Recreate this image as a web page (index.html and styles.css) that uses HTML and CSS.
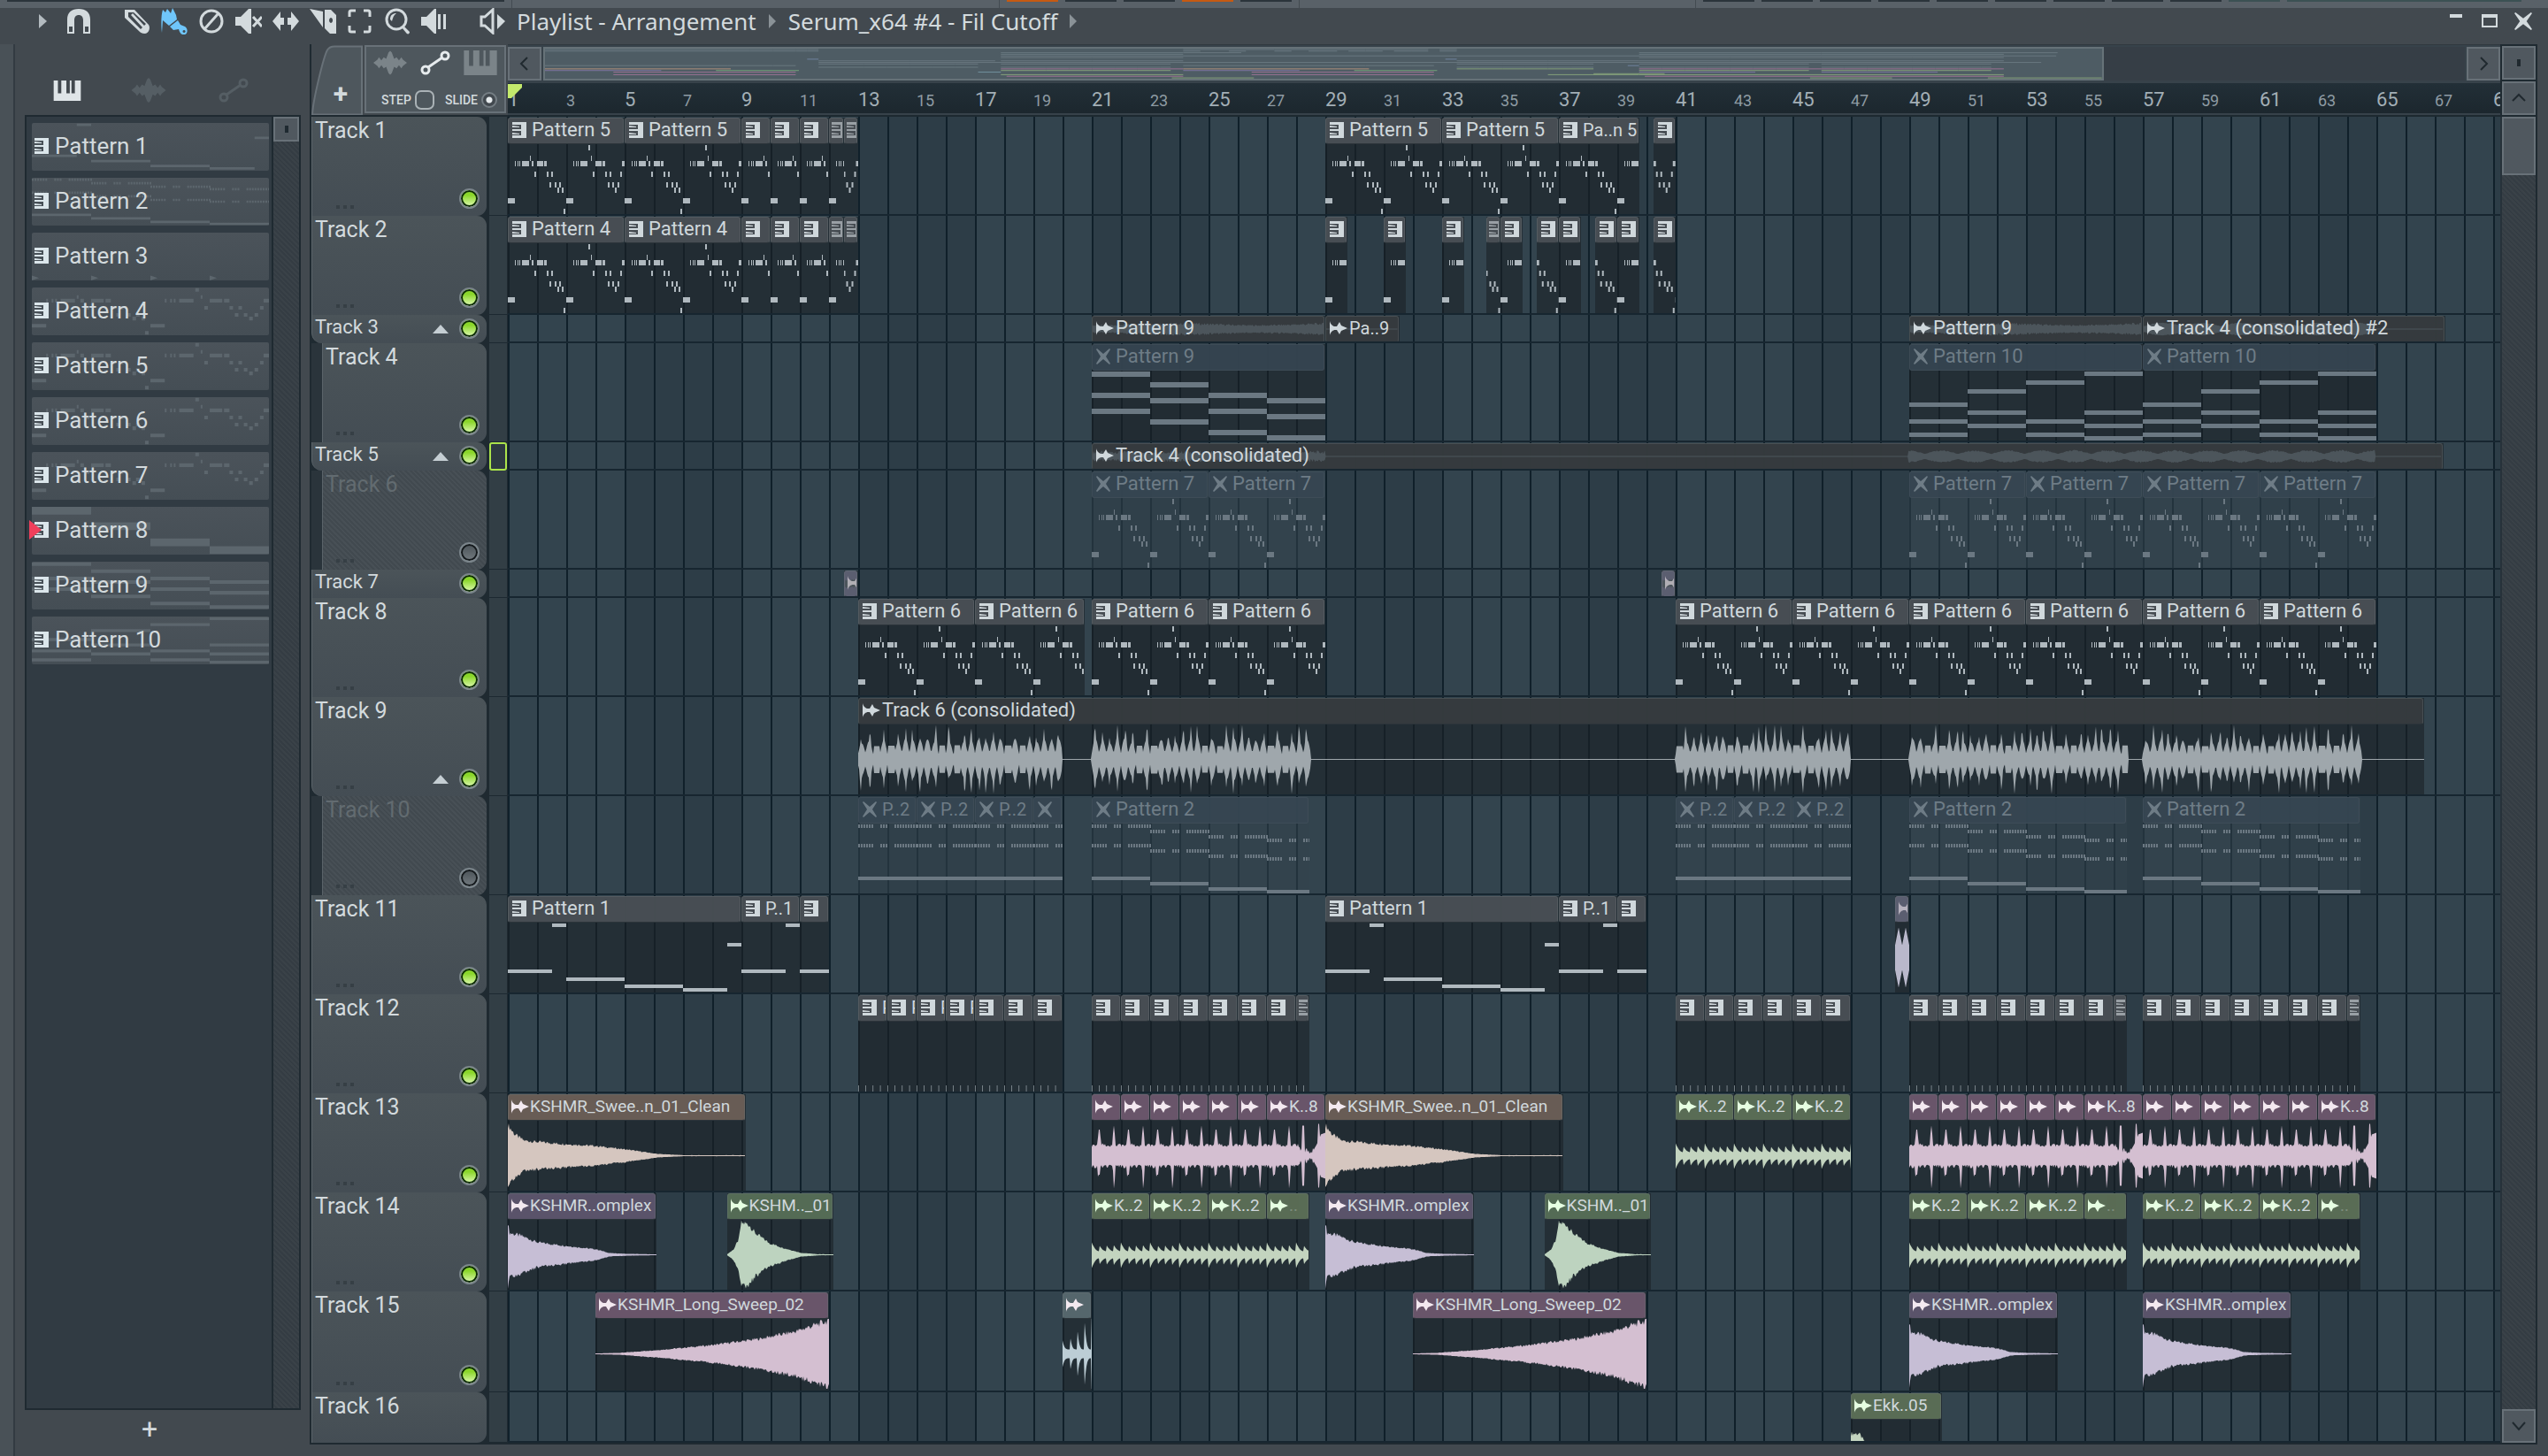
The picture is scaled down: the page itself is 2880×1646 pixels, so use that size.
FILE: index.html
```html
<!DOCTYPE html>
<html lang="en">
<head>
  <meta charset="UTF-8">
  <meta name="viewport" content="width=device-width, initial-scale=1.0">
  <title>Playlist - Arrangement</title>
  <link rel="stylesheet" href="styles.css">
</head>
<body>
  <!-- shared icons -->
  <svg class="defs" width="0" height="0">
    <symbol id="i-keys" viewBox="0 0 16 18" preserveAspectRatio="none"><path d="M0 0h16v18H0v-3h10v-5H0V8h10V3H0zM0 4l8 1v1H0zM0 12l8 1v1H0z"/></symbol>
    <symbol id="i-audio" viewBox="0 0 20 16"><path d="M0 0c1 4 4 6 6 6l2 0 3-5 2 4 7 3-7 3-2 4-3-5-2 0c-2 0-5 2-6 6z"/></symbol>
    <symbol id="i-mute" viewBox="0 0 16 18" preserveAspectRatio="none"><path d="M0 1l1-1 7 6 7-6 1 1-5 8 5 8-1 1-7-6-7 6-1-1 5-8z"/></symbol>
    <symbol id="i-piano" viewBox="0 0 32 24"><path d="M0 0h5v15h4V0h2v15h0V0h4v15h4V0h2v0h0v15h4V0h7v24H0z"/></symbol>
    <symbol id="i-wave" viewBox="0 0 42 30"><path d="M0 15l5-4 2-3 3 4 3-4 3 2 3-8 2-2 2 2 3 8 3-2 3 4 3-4 2 3 5 4-5 4-2 3-3-4-3 4-3-2-3 8-2 2-2-2-3-8-3 2-3-4-3 4-2-3z"/></symbol>
    <symbol id="i-auto" viewBox="0 0 34 28"><g fill="none" stroke="currentColor" stroke-width="3"><circle cx="6" cy="22" r="4"/><circle cx="28" cy="6" r="4"/><path d="M9 19L25 8"/></g></symbol>
  </svg>

  <div class="app-strip">
    <i class="slot slot-main"></i>
    <i class="slot-gap"></i>
    <i class="slot hot"></i><i class="slot"></i><i class="slot"></i><i class="slot hot"></i><i class="slot"></i>
    <i class="slot-gap wide"></i>
    <i class="slot"></i><i class="slot"></i><i class="slot"></i><i class="slot"></i><i class="slot"></i><i class="slot"></i><i class="slot"></i><i class="slot"></i><i class="slot"></i><i class="slot teal"></i>
    <i class="slot teal slot-last"></i>
  </div>

  <header class="titlebar">
    <button class="menu" aria-label="Playlist options"><svg viewBox="0 0 10 18"><path d="M0 0l10 9L0 18z"/></svg></button>
    <button class="tool magnet" aria-label="Snap"><svg viewBox="0 0 30 30"><path d="M2 29V13C2 5 7 1 15 1s13 4 13 12v16h-8V14c0-4-2-6-5-6s-5 2-5 6v15zM4 27h4v-6H4zM22 27h4v-6h-4z" fill-rule="evenodd"/></svg></button>
    <div class="tools">
      <button class="tool" aria-label="Draw"><svg viewBox="0 0 30 30"><path d="M1 11V2l11 0 16 17c2 3 1 9-4 10-4 0-6-2-7-3zM5 5v5l14 14 2-2L8 8l2-2 13 14 2-2L11 5z" fill-rule="evenodd"/></svg></button>
      <button class="tool active" aria-label="Paint"><svg viewBox="0 0 30 30"><path d="M2 2l3 3 2-4 4 5 2-6 4 8 1 5-9 7-7-6-1 14C0 20 0 8 2 2zM10 21l9-7 3 5 5 2c4 3 3 8 0 9-4 1-6-2-7-6l-6 1zM26 25a1.5 1.5 0 1 0 .1 0z" fill-rule="evenodd"/></svg></button>
      <button class="tool" aria-label="Delete"><svg viewBox="0 0 30 30"><circle class="line" cx="15" cy="15" r="12"/><path class="line" d="M7 24L23 6"/></svg></button>
      <button class="tool" aria-label="Mute"><svg viewBox="0 0 30 30"><path d="M0 10h6L15 1h3v28h-3L6 20H0z"/><path class="line" d="M20 10l10 11M30 10L20 21"/></svg></button>
      <button class="tool" aria-label="Slip"><svg viewBox="0 0 30 30"><path d="M0 15L9 4v7h4V5v20H13v-6H9v7zM30 15L21 4v7h-4V5v20h0v-6h4v7z"/></svg></button>
      <button class="tool" aria-label="Slice"><svg viewBox="0 0 30 30"><path d="M0 1l15 3v18zM17 2h7l6 6v21h-7l-6-6zM24 11a2 3 0 1 0 .1 0z" fill-rule="evenodd"/></svg></button>
      <button class="tool" aria-label="Select"><svg viewBox="0 0 30 30"><path class="line" d="M3 10V5q0-2 2-2h5M19 3h5q2 0 2 2v5M26 20v5q0 2-2 2h-5M10 27H5q-2 0-2-2v-5"/></svg></button>
      <button class="tool" aria-label="Zoom"><svg viewBox="0 0 30 30"><circle class="line" cx="14" cy="13" r="11"/><path d="M7 13c0-5 3-7 7-7-3 2-4 5-5 9zM20 22l3-1 6 6c0 3-3 3-4 1z"/></svg></button>
      <button class="tool" aria-label="Playback"><svg viewBox="0 0 30 30"><path d="M0 10h6L15 1h2v28h-2L6 20H0zM19 7h3v17h-3zM25 7h3v17h-3z"/></svg></button>
    </div>
    <button class="tool target" aria-label="Preview"><svg viewBox="0 0 30 30"><path class="line" d="M2 10h4l9-8v26l-9-8H2z"/><path d="M20 7l9 8-9 9z"/></svg></button>
    <nav class="crumbs">
      <a href="#">Playlist - Arrangement</a><i></i>
      <a href="#">Serum_x64 #4 - Fil Cutoff</a><i></i>
    </nav>
    <div class="window-buttons">
      <button aria-label="Minimize"><svg viewBox="0 0 20 20"><path d="M3 2h14v4H3z"/></svg></button>
      <button aria-label="Maximize"><svg viewBox="0 0 20 20"><path d="M1 2h18v15H1zM3 6v9h14V6z" fill-rule="evenodd"/></svg></button>
      <button aria-label="Close"><svg><use href="#i-mute"/></svg></button>
    </div>
  </header>

  <main class="window">
    <div class="edge"></div>

    <aside class="browser">
      <div class="browser-tabs">
        <button class="on" aria-label="Patterns"><svg><use href="#i-piano"/></svg></button>
        <button aria-label="Audio clips"><svg><use href="#i-wave"/></svg></button>
        <button aria-label="Automation"><svg><use href="#i-auto"/></svg></button>
      </div>
      <div class="browser-box">
        <ul id="patterns" class="patterns"></ul>
        <div class="bar-scroll"><div class="bar-thumb"></div></div>
      </div>
      <button class="add-pattern" aria-label="Add pattern">+</button>
    </aside>

    <section class="playlist">
      <div class="corner">
        <button class="tab" aria-label="Add track">
          <svg viewBox="0 0 58 78"><path d="M1 78C2 60 14 12 18 5c2-3 4-4 8-4h31v77z"/></svg>
          <span>+</span>
        </button>
        <div class="modes">
          <div class="mode-icons">
            <svg><use href="#i-wave"/></svg>
            <svg class="on"><use href="#i-auto"/></svg>
            <svg><use href="#i-piano"/></svg>
          </div>
          <div class="mode-switches">
            <label for="step">STEP</label><input type="checkbox" id="step">
            <label for="slide">SLIDE</label><input type="radio" id="slide" checked>
          </div>
        </div>
      </div>
      <div class="timeline-head">
        <div class="overview">
          <button class="scroll-btn" aria-label="Scroll left"><svg viewBox="0 0 20 20"><path d="M13 3L6 10l7 7"/></svg></button>
          <div class="overview-track"><div class="overview-thumb" id="overview"></div></div>
          <button class="scroll-btn" aria-label="Scroll right"><svg viewBox="0 0 20 20"><path d="M7 3l7 7-7 7"/></svg></button>
        </div>
        <div class="ruler" id="ruler">
          <svg class="playhead" viewBox="0 0 16 18"><path d="M0 0h16v4L4 16H0z"/></svg>
        </div>
      </div>
      <div class="side-head">
        <button class="scroll-btn knob" aria-label="Zoom"><i></i></button>
        <button class="scroll-btn" aria-label="Scroll up"><svg viewBox="0 0 20 20"><path d="M3 13l7-7 7 7"/></svg></button>
      </div>
      <div class="tracks" id="tracks"></div>
      <div class="side">
        <div class="side-thumb"></div>
        <button class="scroll-btn" aria-label="Scroll down"><svg viewBox="0 0 20 20"><path d="M3 6l7 8 7-8"/></svg></button>
      </div>
    </section>
  </main>
  <script src="script.js"></script>
</body>
</html>
```
FILE: styles.css
```css
* {
  margin: 0;
  padding: 0;
  box-sizing: border-box;
}
:root {
  --bar: 33px;
  --panel: #42494f;
  --button: #50585f;
  --button-edge: #687178;
  --dark: #1f2a31;
  --text: #d3dadd;
}
body {
  display: flex;
  flex-direction: column;
  height: 100vh;
  overflow: hidden;
  background-color: var(--panel);
  color: var(--text);
  font-family: Roboto, sans-serif;
}
button {
  border: none;
  background: none;
  color: inherit;
  font: inherit;
  cursor: pointer;
}
svg {
  display: block;
  fill: currentColor;
}
.defs {
  position: absolute;
}

/* bottom edge of the main toolbar */
.app-strip {
  display: flex;
  gap: 8px;
  height: 9px;
  padding-left: 8px;
  background-color: #596168;
  flex: none;
}
.slot {
  width: 58px;
  height: 2px;
  background-color: #2b343b;
  flex: none;
}
.slot-main {
  width: 562px;
}
.slot-gap {
  width: 552px;
  border-left: 1px solid #434b51;
  border-right: 1px solid #434b51;
  flex: none;
}
.slot-gap.wide {
  width: 449px;
}
.slot.hot {
  background-color: #c65a12;
}
.slot.teal {
  background-color: #3c5154;
}
.slot-last {
  width: 265px;
}

/* title bar */
.titlebar {
  display: flex;
  align-items: center;
  height: 41px;
  padding: 0 18px 12px 44px;
  flex: none;
}
.menu svg {
  width: 9px;
  height: 18px;
  color: #b3bbc0;
}
.menu {
  width: 30px;
}
.tool svg {
  width: 30px;
  height: 30px;
}
.tool.active {
  color: #6fc6fa;
}
.line {
  fill: none;
  stroke: currentColor;
  stroke-width: 3;
}
.tools {
  display: flex;
  gap: 12px;
  margin-left: 36px;
}
.target {
  margin-left: 36px;
}
.crumbs {
  display: flex;
  align-items: center;
  margin-left: 12px;
  height: 30px;
  font-family: "Noto Sans", sans-serif;
  font-size: 26px;
  line-height: 30px;
}
.crumbs a {
  color: var(--text);
  text-decoration: none;
}
.crumbs i {
  margin: 0 14px 0 14px;
  border-left: 8px solid #8a9297;
  border-top: 8px solid transparent;
  border-bottom: 8px solid transparent;
}
.window-buttons {
  display: flex;
  gap: 18px;
  margin-left: auto;
}
.window-buttons svg {
  width: 20px;
  height: 20px;
}

.window {
  display: flex;
  flex: 1;
  min-height: 0;
  padding-right: 12px;
}
.edge {
  width: 17px;
  background-color: #495157;
  border-right: 2px solid #333b42;
}

/* pattern list on the left */
.browser {
  display: flex;
  flex-direction: column;
  width: 333px;
  padding: 0 10px 0 11px;
}
.browser-tabs {
  display: flex;
  align-items: center;
  justify-content: space-between;
  height: 80px;
  padding: 24px 56px 0 32px;
  color: #555e64;
}
.browser-tabs .on {
  color: #dfe5e8;
}
.browser-tabs svg {
  width: 40px;
  height: 28px;
}
.browser-tabs .on svg {
  width: 32px;
  height: 23px;
}
.browser-box {
  display: flex;
  flex: 1;
  min-height: 0;
  background-color: #313b43;
  border: 2px solid var(--dark);
}
.patterns {
  flex: 1;
  list-style: none;
  padding: 7px 3px 0 6px;
}
.pattern {
  position: relative;
  display: flex;
  align-items: center;
  gap: 7px;
  height: 54px;
  margin-bottom: 8px;
  padding: 0 0 2px 3px;
  background: linear-gradient(#4b535a, #454e55);
  border-radius: 2px;
  font-size: 26px;
}
.pattern .preview {
  position: absolute;
  inset: 0;
  width: 100%;
  height: 100%;
  color: #5c666d;
}
.pattern .keys {
  position: relative;
  width: 16px;
  height: 18px;
  color: #dbe6eb;
}
.pattern span {
  position: relative;
}
.pattern.current::before {
  content: "";
  position: absolute;
  z-index: 1;
  left: -3px;
  border-left: 14px solid #f03f5b;
  border-top: 11px solid transparent;
  border-bottom: 11px solid transparent;
}
.bar-scroll {
  width: 31px;
  border-left: 2px solid var(--dark);
}
.bar-scroll,
.side {
  background: repeating-linear-gradient(45deg, #3a4248 0 2px, #343c43 2px 4px);
}
.bar-thumb {
  height: 28px;
  background: linear-gradient(var(--dark), var(--dark)) center / 4px 8px no-repeat var(--button);
  border: 2px solid var(--button-edge);
}
.add-pattern {
  height: 52px;
  padding: 0 30px 10px 0;
  font-size: 32px;
  line-height: 32px;
}

/* playlist frame */
.playlist {
  flex: 1;
  min-width: 0;
  display: grid;
  grid-template-columns: 222px minmax(0, 1fr) 42px;
  grid-template-rows: 82px minmax(0, 1fr);
  margin-bottom: 13px;
  border-left: 2px solid var(--dark);
  border-bottom: 2px solid var(--dark);
}
.corner {
  display: flex;
  gap: 2px;
  padding: 1px 2px 2px 0;
  background-color: var(--panel);
  border-bottom: 2px solid var(--dark);
}
.tab {
  position: relative;
  width: 58px;
}
.tab svg {
  position: absolute;
  inset: 0;
  width: 58px;
  height: 79px;
  fill: #4e575d;
  stroke: var(--button-edge);
  stroke-width: 2;
}
.tab span {
  position: relative;
  display: block;
  padding: 32px 0 0 8px;
  font-size: 30px;
  font-weight: 700;
}
.modes {
  flex: 1;
  display: flex;
  flex-direction: column;
  justify-content: space-between;
  padding: 4px 8px 2px 8px;
  background-color: #4e575d;
  border: 2px solid var(--button-edge);
}
.mode-icons {
  display: flex;
  justify-content: space-between;
  align-items: center;
  color: #7b8489;
}
.mode-icons svg {
  width: 38px;
  height: 28px;
}
.mode-icons .on {
  color: #e6ebed;
}
.mode-switches {
  display: flex;
  align-items: center;
  justify-content: flex-end;
  gap: 4px;
  font-size: 14px;
  font-weight: 500;
}
.mode-switches input {
  appearance: none;
  width: 22px;
  height: 22px;
  border: 2px solid #aab2b6;
  border-radius: 7px;
}
.mode-switches input[type="radio"] {
  width: 18px;
  height: 18px;
  border: 2px solid #757e84;
  border-radius: 50%;
  background: radial-gradient(circle, #e6ebed 0 3px, #42494f 4px);
}
.mode-switches input[type="checkbox"] {
  margin-right: 8px;
}
.timeline-head {
  min-width: 0;
  padding-top: 2px;
  background-color: #37424a;
  border-top: 1px solid #31393f;
  border-bottom: 2px solid #1d2930;
}
.overview {
  display: flex;
  gap: 2px;
  height: 38px;
}
.scroll-btn {
  display: grid;
  place-items: center;
  width: 38px;
  height: 38px;
  background-color: var(--button);
  border: 2px solid var(--button-edge);
  flex: none;
}
.scroll-btn svg {
  width: 20px;
  height: 20px;
  fill: none;
  stroke: #20292f;
  stroke-width: 2;
}
.knob i {
  width: 4px;
  height: 8px;
  background-color: #20292f;
}
.overview-track {
  flex: 1;
  background-color: #363e46;
}
.overview-thumb {
  width: 81.2%;
  height: 38px;
  background-color: #4e5c64;
  border: 2px solid #667278;
}
.overview-thumb svg {
  width: 100%;
  height: 100%;
}
.ruler {
  position: relative;
  display: flex;
  align-items: baseline;
  height: 34px;
  margin-top: 3px;
  padding-top: 6px;
  overflow: hidden;
  background: linear-gradient(#222f37, #1c272e);
  color: #8e9ba3;
}
.ruler span {
  width: calc(2 * var(--bar));
  flex: none;
  font-size: 18px;
  line-height: 26px;
}
.ruler .major {
  color: #a3afb6;
  font-size: 22px;
}
.playhead {
  position: absolute;
  top: 1px;
  left: 0;
  width: 16px;
  height: 18px;
  color: #c4ea6c;
}
.side-head {
  display: flex;
  flex-direction: column;
  gap: 2px;
  padding: 2px;
  background-color: var(--dark);
}
.side {
  display: flex;
  flex-direction: column;
  justify-content: space-between;
  padding: 0 2px;
  border-right: 2px solid var(--dark);
  border-left: 2px solid #27323a;
}
.side-thumb {
  width: 38px;
  height: 66px;
  background-color: var(--button);
  border: 2px solid var(--button-edge);
}
.side,
.side-head {
  align-items: center;
}

/* tracks */
.tracks {
  grid-column: 1 / 3;
  display: flex;
  flex-direction: column;
  min-height: 0;
  overflow: hidden;
  background-color: var(--dark);
}
.track {
  display: flex;
  height: 112px;
  flex: none;
}
.track.small {
  height: 32px;
}
.track.tall {
  height: 114px;
}
.track:last-child {
  flex: 1;
  min-height: 0;
}
.track-head {
  position: relative;
  width: 198px;
  padding: 1px 8px 0 3px;
  background: linear-gradient(#4b5459, #444d54);
  border-left: 1px solid #5a6369;
  border-radius: 0 11px 11px 0;
  font-size: 25px;
  line-height: 30px;
  flex: none;
}
.small .track-head {
  padding-top: 0;
  font-size: 22px;
  line-height: 28px;
}
.nested .track-head {
  width: 186px;
  margin-left: 12px;
}
.nested {
  background: linear-gradient(#2a343b, #2a343b) 0 0 / 12px 100% no-repeat;
}
.parent .track-head {
  border-bottom-left-radius: 12px;
}
.off .track-head {
  background: repeating-linear-gradient(45deg, #41494f 0 2px, #485056 2px 4px);
  color: #626b70;
}
.track-controls {
  position: absolute;
  right: 8px;
  bottom: 8px;
  display: flex;
  align-items: center;
  gap: 12px;
}
.small .track-controls {
  bottom: 5px;
}
.track-controls i {
  border-bottom: 10px solid #c5ced3;
  border-left: 9px solid transparent;
  border-right: 9px solid transparent;
}
.track-controls input {
  appearance: none;
  width: 23px;
  height: 23px;
  border: 2px solid #7b858b;
  border-radius: 50%;
  background: linear-gradient(#4a5257, #737b80);
  box-shadow: inset 0 0 0 2px #14191c;
  cursor: pointer;
}
.track-controls input:checked {
  background: linear-gradient(#8ad62a 30%, #e2fbb8);
  box-shadow: inset 0 0 0 2px #0c2a06;
}
.dots {
  position: absolute;
  left: 27px;
  bottom: 8px;
  width: 20px;
  height: 4px;
  background: repeating-linear-gradient(90deg, #363f45 0 4px, transparent 4px 8px);
}
.nested .dots {
  left: 15px;
}
.small .dots,
.track:last-child .dots,
.track:last-child .track-controls {
  display: none;
}
.cue {
  width: 20px;
  margin: 0 1px 0 3px;
  background-color: #323e45;
  border-bottom: 1px solid #1d2931;
  flex: none;
}
.cue.marked {
  border: 2px solid #abe34b;
  border-radius: 3px;
  background-color: #2e3a42;
}
.lane {
  position: relative;
  flex: 1;
  min-width: 0;
  overflow: hidden;
  border-bottom: 2px solid #172630;
  background:
    repeating-linear-gradient(90deg, #10202a 0 2px, transparent 2px 33px),
    repeating-linear-gradient(90deg, #33444e 0 132px, #2d3d47 132px 264px);
}

/* clips */
.clip {
  position: absolute;
  top: 1px;
  bottom: 0;
  left: calc(var(--start) * var(--bar));
  width: calc(var(--len) * var(--bar));
  overflow: hidden;
  background-color: rgba(27, 34, 39, 0.6);
  color: #b0b9bf;
}
.clip-head {
  position: relative;
  display: flex;
  align-items: center;
  gap: 6px;
  height: 30px;
  margin-right: 1px;
  padding: 0 0 2px 4px;
  overflow: hidden;
  background-color: rgba(73, 80, 85, 0.94);
  border: 1px solid rgba(110, 118, 122, 0.35);
  border-bottom-color: #2c343a;
  border-radius: 3px;
  color: #d0d8dc;
  font-size: 22px;
  line-height: 26px;
  white-space: nowrap;
}
.clip.short .clip-head {
  font-size: 20px;
}
.clip-head .icon {
  position: relative;
  width: 16px;
  height: 18px;
  flex: none;
}
.clip-head .icon.audio {
  width: 20px;
  height: 16px;
  margin-right: -4px;
}
.clip-head span {
  position: relative;
}
.clip-head .faint {
  opacity: 0.3;
}
.clip-body {
  width: 100%;
  height: 79px;
}
.clip.narrow .clip-head {
  padding-left: 2px;
}
.clip.narrow .clip-head .icon {
  opacity: 0.6;
}
.clip .mini-wave {
  position: absolute;
  inset: 0;
  width: 100%;
  height: 100%;
  color: #4c555b;
}
.track.muted .clip-head {
  background-color: rgba(54, 69, 81, 0.92);
  border-color: rgba(74, 88, 98, 0.4);
  color: #6e7c86;
}
.track.muted .clip {
  color: #6b7882;
}
.track.off .clip {
  background-color: rgba(51, 68, 76, 0.55);
}
.clip.gray .clip-head {
  background-color: rgba(54, 59, 63, 0.94);
}
.clip.gray {
  color: #9fa7ac;
}
.clip.brown { color: #d5c6bf; }
.clip.violet { color: #c6bed5; }
.clip.green { color: #bdd3bf; }
.clip.olive { color: #c3d4bf; }
.clip.pink { color: #d4bfd1; }
.clip.teal { color: #bccdd5; }
.clip.haze { color: #b9b8cb; }
.clip.brown .clip-head { background-color: #685c55; }
.clip.violet .clip-head { background-color: #5a536a; }
.clip.green .clip-head { background-color: #546b55; }
.clip.olive .clip-head { background-color: #596c55; }
.clip.pink .clip-head { background-color: #69556a; }
.clip.teal .clip-head { background-color: #55666c; }
.clip.haze .clip-head { background-color: #5b5e70; }
.clip.sample .clip-head {
  gap: 5px;
  padding-left: 3px;
  font-size: 19px;
}
.clip.sample .icon {
  color: #f3e9f0;
}
.clip.sample.olive .icon,
.clip.sample.green .icon {
  color: #e6ffe2;
}
```
FILE: script.js
```js
const BAR = 33;

// note sets: [x, y, width] in px, 33px per bar
const melody = [
  [0, 61, 8], [8, 19, 1], [11, 19, 1], [13, 19, 1], [16, 19, 8], [25, 13, 1], [27, 19, 2], [30, 31, 2],
  [33, 19, 7], [41, 19, 3], [44, 31, 2], [49, 31, 2], [47, 43, 2], [53, 43, 2], [56, 49, 2], [58, 43, 2],
  [61, 49, 2], [63, 73, 2], [66, 61, 8], [74, 19, 1], [77, 19, 1], [79, 19, 1], [82, 19, 8], [91, 1, 2],
  [94, 13, 1], [96, 31, 2], [99, 19, 7], [107, 19, 3], [110, 31, 2], [115, 31, 2], [113, 43, 2],
  [118, 43, 2], [121, 49, 2], [124, 43, 2], [127, 31, 2], [129, 19, 3]
];
const bass = [[0, 53, 50], [50, 1, 16], [66, 62, 66], [132, 70, 66], [198, 74, 50], [248, 23, 16]];

function chords(rows) {
  return rows.flatMap((ys, i) => ys.map(y => [i * 66, y, 66]));
}

function stabs(rows) {
  const notes = [];
  rows.forEach((ys, i) => {
    [[0, 18], [25, 34], [41, 66]].forEach(([a, b]) => {
      for (let x = a; x < b; x += 3) {
        notes.push([i * 66 + x, ys[0], 2], [i * 66 + x, ys[1], 2]);
      }
    });
    notes.push([i * 66, ys[2], 66]);
  });
  return notes;
}

const ticks = Array.from({ length: 32 }, (_, i) => [i * 8.25, 72, 0.6]);

const patterns = {
  1: { notes: bass, h: 4, len: 8 },
  2: { notes: stabs([[1, 23, 60], [7, 29, 66], [13, 35, 72], [17, 38, 75]]), h: 4, len: 8 },
  3: { notes: ticks, h: 7, len: 8 },
  4: { notes: melody, h: 6, len: 4 },
  5: { notes: melody, h: 6, len: 4 },
  6: { notes: melody, h: 6, len: 4 },
  7: { notes: melody, h: 6, len: 4 },
  8: { notes: chords([[0], [26], [53], [66]]), h: 13, len: 8 },
  9: { notes: chords([[1, 25, 43], [13, 31, 55], [25, 43, 67], [31, 49, 73]]), h: 6, len: 8 },
  10: { notes: chords([[36, 55, 70], [21, 45, 60], [11, 55, 70], [1, 45, 60, 74]]), h: 5, len: 8 }
};

// repeatable noise
function noise(i) {
  const v = Math.sin(i * 12.9898) * 43758.5453;
  return v - Math.floor(v);
}

function envelope(points, t) {
  for (let i = 1; i < points.length; i++) {
    if (t <= points[i][0]) {
      const [x0, y0] = points[i - 1];
      const [x1, y1] = points[i];
      return y0 + (y1 - y0) * (t - x0) / (x1 - x0);
    }
  }
  return points[points.length - 1][1];
}

function shaped(points) {
  return (x, w, side) => envelope(points, x / w) * (0.88 + 0.22 * noise(x + side * 500));
}

// quarter-bar hits: a wide body with a narrow spike, some of them flat
function bursts(x, side) {
  const n = Math.floor(x / 8.25);
  const t = (x % 8.25) / 8.25;
  if (n % 9 === 2 || n % 9 === 4) {
    return t < 0.1 ? 6 : 15 + noise(n + side);
  }
  const peak = 22 + 17 * noise(n * 3 + side * 77);
  const body = 7 + (11 + 6 * noise(n * 5)) * Math.sin(Math.PI * t);
  const spike = peak * Math.max(0, 1.1 - Math.abs(t - 0.35 - 0.3 * noise(n)) * 3.5);
  return Math.min(39, Math.max(body, spike));
}

function inside(x, ranges) {
  return ranges.find(r => x >= r[0] * BAR && x < r[1] * BAR);
}

function kick(x, side) {
  const n = Math.floor((x - 8) / 16.5);
  const d = Math.abs(x - 8.5 - Math.round((x - 8.5) / 16.5) * 16.5);
  const peak = side ? (n % 2 ? 37 : 26) : 34;
  const base = 10 + 4 * noise(x * 3 + side);
  return d < 2 ? peak - d * 9 : base;
}

const waves = {
  fall: shaped([[0, 35], [0.03, 24], [0.07, 17], [0.2, 14], [0.37, 11], [0.5, 7], [0.63, 2], [0.74, 0.6], [1, 0.6]]),
  decay: shaped([[0, 38], [0.01, 25], [0.1, 21], [0.2, 14], [0.35, 11], [0.5, 8], [0.6, 6], [0.68, 2], [0.8, 1], [1, 0.5]]),
  burst: shaped([[0, 0.6], [0.06, 6], [0.11, 18], [0.13, 36], [0.2, 35], [0.26, 25], [0.4, 13], [0.55, 7], [0.7, 2], [0.85, 0.7], [1, 0.5]]),
  late: shaped([[0, 24], [0.09, 24], [0.2, 8], [0.4, 0.5], [1, 0.5]]),
  rise: shaped([[0, 0.5], [0.1, 1], [0.3, 5], [0.5, 10], [0.7, 17], [0.85, 25], [1, 38]]),
  kicks: (x, w, side) => kick(x, side),
  kicksEnd: (x, w, side) => {
    if (x < 36) return kick(x, side);
    if (x > 52) return x > 57 && x < 60 ? 36 : envelope([[52, 5], [58, 16], [61, 24], [66, 26]], x);
    return Math.abs(x - 41) < 2 ? 34 : 2 + 8 * noise(x);
  },
  hats: (x, w, side) => {
    const t = (x % 8.25) / 8.25;
    return 4 + (x % 33 < 8.25 ? 11 : 8) * Math.pow(1 - t, 2) * (side ? 1 : 0.9);
  },
  plucks: x => {
    const n = Math.floor(x / 8.25);
    const t = (x % 8.25) / 8.25;
    return 5 + (10 + n * 8) * Math.pow(Math.abs(1 - t), 4);
  },
  bits: x => 34 - 20 * Math.abs(((x % 8) - 4) / 4),
  synth: (x, w, side) => {
    return inside(x, [[0, 7], [8, 15.5], [28, 34], [36, 43.5], [44, 51.5]]) ? bursts(x, side) : 0.5;
  },
  pad: (x, w, side) => (4 + 2.5 * Math.sin(x / 60) ** 2) * (0.6 + 0.5 * noise(x + side * 50)) + 1,
  padShort: x => x < 84 ? 0.5 : 0,
  padTail: (x, w, side) => {
    if (x < BAR * 8) return 3 + 4 * noise(x + side * 50);
    if (x < BAR * 28 || x > BAR * 44) return 0.5;
    return 3 + 5 * Math.abs(Math.sin(x / 12)) * (0.6 + 0.4 * noise(x + side * 50));
  },
  padEnd: x => x < BAR * 8 ? 3 + 4 * Math.abs(Math.sin(x / 14)) + noise(x) : 0.5
};

function wavePath(fn, width, height) {
  const mid = height / 2;
  const up = [];
  const down = [];
  for (let x = 0; x <= width; x++) {
    up.push(`${x} ${(mid - fn(x, width, 0)).toFixed(1)}`);
    down.unshift(`${x} ${(mid + fn(x, width, 1)).toFixed(1)}`);
  }
  return `M${up.join('L')}L${down.join('L')}z`;
}

function notePath(p) {
  return p.notes.map(([x, y, w]) => `M${x} ${y}h${w}v${p.h}h${-w}z`).join('');
}

// pattern clip: number, start bar, length in bars, label, offset into the pattern
function pat(n, start, len, label = '', offset = 0) {
  return { n, start, len, label, offset };
}

function aud(wave, color, start, len, label = '') {
  return { wave, color, start, len, label };
}

function each(bars, make) {
  return bars.map(make);
}

function intro(n) {
  const name = 'Pattern ' + n;
  return [
    pat(n, 1, 4, name), pat(n, 5, 4, name),
    pat(n, 9, 1), pat(n, 10, 1), pat(n, 11, 1),
    pat(n, 12, 0.5), pat(n, 12.5, 0.5, '', 3.5)
  ];
}

function bassline(b) {
  return [pat(1, b, 8, 'Pattern 1'), pat(1, b + 8, 2, 'P..1'), pat(1, b + 10, 1)];
}

function drums(b) {
  return each([0, 1, 2, 3, 4, 5, 6, 7], i => pat(3, b + i, i === 7 ? 0.45 : 1));
}

function kicks(b) {
  return [
    ...each([0, 1, 2, 3, 4, 5], i => aud('kicks', 'pink', b + i, 1)),
    aud('kicksEnd', 'pink', b + 6, 2, 'K..8')
  ];
}

function hats(b) {
  return [
    ...each([0, 2, 4], i => aud('hats', 'olive', b + i, 2, 'K..2')),
    aud('hats', 'olive', b + 6, 1.45, '..')
  ];
}

const tracks = [
  { clips: [
    ...intro(5),
    pat(5, 29, 4, 'Pattern 5'), pat(5, 33, 4, 'Pattern 5'), pat(5, 37, 2.75, 'Pa..n 5'), pat(5, 40.25, 0.75, '', 3.25)
  ] },
  { clips: [
    ...intro(4),
    pat(4, 29, 0.75), pat(4, 31, 0.75, '', 2), pat(4, 33, 0.75), pat(4, 34.5, 0.5, '', 1.5), pat(4, 35, 0.75, '', 2),
    pat(4, 36.25, 0.75, '', 1.25), pat(4, 37, 0.75), pat(4, 38.25, 0.75, '', 1.25), pat(4, 39, 0.75, '', 2),
    pat(4, 40.25, 0.75, '', 1.25)
  ] },
  { size: 'small', parent: true, clips: [
    aud('pad', 'gray', 21, 8, 'Pattern 9'), aud('padShort', 'gray', 29, 2.55, 'Pa..9'),
    aud('pad', 'gray', 49, 8, 'Pattern 9'), aud('padEnd', 'gray', 57, 10.36, 'Track 4 (consolidated) #2')
  ] },
  { nested: true, muted: true, clips: [
    pat(9, 21, 8, 'Pattern 9'), pat(10, 49, 8, 'Pattern 10'), pat(10, 57, 8, 'Pattern 10')
  ] },
  { size: 'small', parent: true, cue: true, clips: [aud('padTail', 'gray', 21, 46.3, 'Track 4 (consolidated)')] },
  { nested: true, muted: true, off: true, clips: each([21, 25, 49, 53, 57, 61], b => pat(7, b, 4, 'Pattern 7')) },
  { size: 'small', clips: [aud('pad', 'haze', 12.5, 0.5), aud('pad', 'haze', 40.5, 0.5)] },
  { clips: each([13, 17, 21, 25, 41, 45, 49, 53, 57, 61], b => pat(6, b, b === 17 ? 3.75 : 4, 'Pattern 6')) },
  { parent: true, clips: [aud('synth', 'gray', 13, 53.64, 'Track 6 (consolidated)')] },
  { nested: true, muted: true, off: true, clips: [
    pat(2, 13, 2, 'P..2'), pat(2, 15, 2, 'P..2'), pat(2, 17, 2, 'P..2'), pat(2, 19, 1),
    pat(2, 21, 7.45, 'Pattern 2'),
    pat(2, 41, 2, 'P..2'), pat(2, 43, 2, 'P..2'), pat(2, 45, 2, 'P..2'),
    pat(2, 49, 7.45, 'Pattern 2'), pat(2, 57, 7.45, 'Pattern 2')
  ] },
  { clips: [...bassline(1), ...bassline(29), aud('bits', 'haze', 48.5, 0.5)] },
  { clips: [
    ...each([13, 14, 15, 16], b => pat(3, b, 1, 'P')), ...each([17, 18, 19], b => pat(3, b, 1)),
    ...drums(21), ...each([41, 42, 43, 44, 45, 46], b => pat(3, b, 1)), ...drums(49), ...drums(57)
  ] },
  { clips: [
    aud('fall', 'brown', 1, 8.15, 'KSHMR_Swee..n_01_Clean'), ...kicks(21),
    aud('fall', 'brown', 29, 8.15, 'KSHMR_Swee..n_01_Clean'),
    ...each([41, 43, 45], b => aud('hats', 'olive', b, 2, 'K..2')), ...kicks(49), ...kicks(57)
  ] },
  { clips: [
    aud('decay', 'violet', 1, 5.1, 'KSHMR..omplex'), aud('burst', 'green', 8.5, 3.64, 'KSHM.._01'), ...hats(21),
    aud('decay', 'violet', 29, 5.1, 'KSHMR..omplex'), aud('burst', 'green', 36.5, 3.64, 'KSHM.._01'),
    ...hats(49), ...hats(57)
  ] },
  { size: 'tall', clips: [
    aud('rise', 'pink', 4, 8, 'KSHMR_Long_Sweep_02'), aud('plucks', 'teal', 20, 1),
    aud('rise', 'pink', 32, 8, 'KSHMR_Long_Sweep_02'),
    aud('decay', 'violet', 49, 5.1, 'KSHMR..omplex'), aud('decay', 'violet', 57, 5.1, 'KSHMR..omplex')
  ] },
  { clips: [aud('late', 'olive', 47, 3.12, 'Ekk..05')] }
];

function clipHtml(clip, track) {
  const width = clip.len * BAR;
  const classes = ['clip'];
  const small = track.size === 'small';
  let icon = 'keys';
  let body = '';
  let behind = '';

  if (clip.n) {
    if (track.muted) icon = 'mute';
    body = `<svg class="clip-body" viewBox="${clip.offset * BAR} 0 ${width} 79" preserveAspectRatio="none"><path d="${notePath(patterns[clip.n])}"/></svg>`;
  } else {
    icon = 'audio';
    classes.push(clip.color);
    if (clip.color !== 'gray') classes.push('sample');
    const h = small ? 30 : 79;
    const svg = `viewBox="0 0 ${width} ${h}" preserveAspectRatio="none"><path d="${wavePath(waves[clip.wave], width, h)}"/></svg>`;
    if (small) {
      behind = '<svg class="mini-wave" ' + svg;
    } else {
      body = '<svg class="clip-body" ' + svg;
    }
  }
  if (clip.len < 3) classes.push('short');
  if (clip.len < 0.6) classes.push('narrow');

  const faint = clip.label === '..' ? ' class="faint"' : '';
  const label = clip.label ? `<span${faint}>${clip.label}</span>` : '';
  return `<div class="${classes.join(' ')}" style="--start:${clip.start - 1};--len:${clip.len}">
    <div class="clip-head">${behind}<svg class="icon ${icon}"><use href="#i-${icon}"/></svg>${label}</div>${body}</div>`;
}

document.getElementById('tracks').innerHTML = tracks.map((track, i) => {
  const name = 'Track ' + (i + 1);
  const classes = ['track', track.size, track.parent && 'parent', track.nested && 'nested',
    track.muted && 'muted', track.off && 'off'].filter(Boolean).join(' ');
  return `<div class="${classes}">
    <div class="track-head">${name}
      <b class="dots"></b>
      <div class="track-controls">${track.parent ? '<i></i>' : ''}<input type="checkbox" aria-label="${name} on" ${track.off ? '' : 'checked'}></div>
    </div>
    <div class="cue ${track.cue ? 'marked' : ''}"></div>
    <div class="lane">${track.clips.map(c => clipHtml(c, track)).join('')}</div>
  </div>`;
}).join('');

// bar numbers
let ruler = '';
for (let bar = 1; bar <= 69; bar += 2) {
  ruler += `<span class="${bar % 4 === 1 ? 'major' : ''}">${bar}</span>`;
}
document.getElementById('ruler').insertAdjacentHTML('afterbegin', ruler);

// pattern list
const cues = [0, 66, 132, 198].map(x => `M${x} 72l8 4-8 4z`).join('');
document.getElementById('patterns').innerHTML = Object.keys(patterns).map(n => {
  const p = patterns[n];
  const d = n === '3' ? cues : notePath(p);
  return `<li class="pattern ${n === '8' ? 'current' : ''}">
    <svg class="preview" viewBox="0 0 ${p.len * BAR} 80" preserveAspectRatio="none"><path d="${d}"/></svg>
    <svg class="keys"><use href="#i-keys"/></svg><span>Pattern ${n}</span></li>`;
}).join('');

// overview of the whole arrangement
const mapColors = {
  brown: '#a58a78', violet: '#77719a', green: '#6f9a77', olive: '#7f9a78', pink: '#94708f',
  teal: '#6f8c99', haze: '#6c7f99', gray: '#66757d'
};
const below = [
  [4, 8, 16, 'pink'], [21, 8, 16, 'olive'], [21.25, 7.75, 17, 'pink'], [28.5, 3.6, 18, 'olive'], [32, 8, 16, 'pink'],
  [45, 4, 16, 'olive'], [49, 16, 16, 'olive'], [49.25, 15.75, 17, 'pink'], [56.5, 3.6, 18, 'olive'], [64.3, 5, 18, 'olive']
];
let map = '';
tracks.forEach((track, row) => {
  track.clips.forEach(c => {
    map += `<rect x="${c.start - 1}" y="${row + 0.2}" width="${c.len}" height="0.6" fill="${mapColors[c.color] || '#66757d'}"/>`;
  });
});
below.forEach(([x, w, row, color]) => {
  map += `<rect x="${x - 1}" y="${row - 0.2}" width="${w}" height="0.6" fill="${mapColors[color]}"/>`;
});
document.getElementById('overview').innerHTML =
  `<svg viewBox="0 0 68.3 18.6" preserveAspectRatio="none">${map}</svg>`;
```
